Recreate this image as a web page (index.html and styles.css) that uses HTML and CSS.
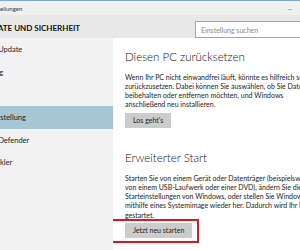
FILE: index.html
```html
<!DOCTYPE html>
<html lang="de">
<head>
    <meta charset="UTF-8">
    <title>Einstellungen</title>
    <link rel="stylesheet" href="styles.css">
</head>
<body>
    <div class="window">
        <div class="titlebar">
            <span class="title">Einstellungen</span>
            <span class="minimize">&#8212;</span>
        </div>

        <header class="header">
            <h1>UPDATE UND SICHERHEIT</h1>
            <div class="search">Einstellung suchen</div>
        </header>

        <div class="main">
            <nav class="nav">
                <a class="nav-item">Windows Update</a>
                <a class="nav-item">Aktivierung</a>
                <a class="nav-item">Backup</a>
                <a class="nav-item active">Wiederherstellung</a>
                <a class="nav-item">Windows Defender</a>
                <a class="nav-item">Für Entwickler</a>
            </nav>

            <section class="content">
                <h2>Diesen PC zurücksetzen</h2>
                <p>Wenn Ihr PC nicht einwandfrei läuft, könnte es hilfreich sein, ihn<br>
                zurückzusetzen. Dabei können Sie auswählen, ob Sie Dateien<br>
                beibehalten oder entfernen möchten, und Windows<br>
                anschließend neu installieren.</p>
                <button class="btn">Los geht's</button>

                <h2 class="second">Erweiterter Start</h2>
                <p>Starten Sie von einem Gerät oder Datenträger (beispielsweise<br>
                von einem USB-Laufwerk oder einer DVD), ändern Sie die<br>
                Starteinstellungen von Windows, oder stellen Sie Windows<br>
                mithilfe eines Systemimage wieder her. Dadurch wird Ihr PC neu<br>
                gestartet.</p>
                <div class="restart">
                    <button class="btn">Jetzt neu starten</button>
                    <span class="marker"></span>
                </div>
            </section>
        </div>
    </div>
</body>
</html>
```

FILE: styles.css
```css
* {
    margin: 0;
    padding: 0;
    box-sizing: border-box;
}

body {
    width: 300px;
    height: 250px;
    overflow: hidden;
    font-family: 'Lato', sans-serif;
    color: #222;
    background: #fff;
}

.window {
    border-top: 1px solid #7ea9c9;
    height: 250px;
    display: flex;
    flex-direction: column;
}

/* Titelleiste */
.titlebar {
    height: 14px;
    background: #f0f0f0;
    display: flex;
    align-items: center;
    justify-content: space-between;
    font-size: 6px;
}

.title {
    margin-left: -13px;
    color: #333;
}

.minimize {
    margin-right: 8px;
    color: #444;
}

/* Kopfzeile mit Suche */
.header {
    height: 23px;
    background: #e8e8e8;
    display: flex;
    align-items: center;
    justify-content: space-between;
}

.header h1 {
    font-size: 8px;
    font-weight: 700;
    margin-left: -19px;
    margin-top: 2px;
    color: #111;
}

.search {
    width: 110px;
    height: 17px;
    margin-right: -5px;
    margin-top: 5px;
    border: 1px solid #a6a6a6;
    background: #fff;
    color: #888;
    font-size: 7px;
    padding: 4px 5px;
}

.main {
    flex: 1;
    display: flex;
}

/* Navigation links */
.nav {
    width: 113px;
    background: #f2f2f2;
    display: flex;
    flex-direction: column;
    overflow: hidden;
    padding-top: 0.4px;
}

.nav-item {
    height: 22.6px;
    flex-shrink: 0;
    display: flex;
    align-items: center;
    font-size: 7.5px;
    color: #222;
    white-space: nowrap;
    text-indent: -35px;
}

.nav-item.active {
    background: #a5c7d4;
}

/* Inhalt */
.content {
    flex: 1;
    padding: 10.7px 0 0 12px;
    white-space: nowrap;
    overflow: hidden;
}

.content h2 {
    font-size: 11.5px;
    line-height: 16px;
    font-weight: 300;
    color: #111;
}

.content h2.second {
    margin-top: 22px;
}

.content p {
    font-size: 7px;
    line-height: 9.2px;
    color: #222;
    margin-top: 8.2px;
    margin-bottom: 3px;
}

.btn {
    display: block;
    border: none;
    background: #cccccc;
    font-family: 'Lato', sans-serif;
    font-size: 7px;
    color: #222;
    height: 15px;
    padding: 0 8px;
}

.restart {
    position: relative;
}

/* rote Markierung um den Button */
.marker {
    position: absolute;
    left: -16px;
    top: -4px;
    width: 90px;
    height: 24px;
    border: 2px solid #e2141c;
}
```
